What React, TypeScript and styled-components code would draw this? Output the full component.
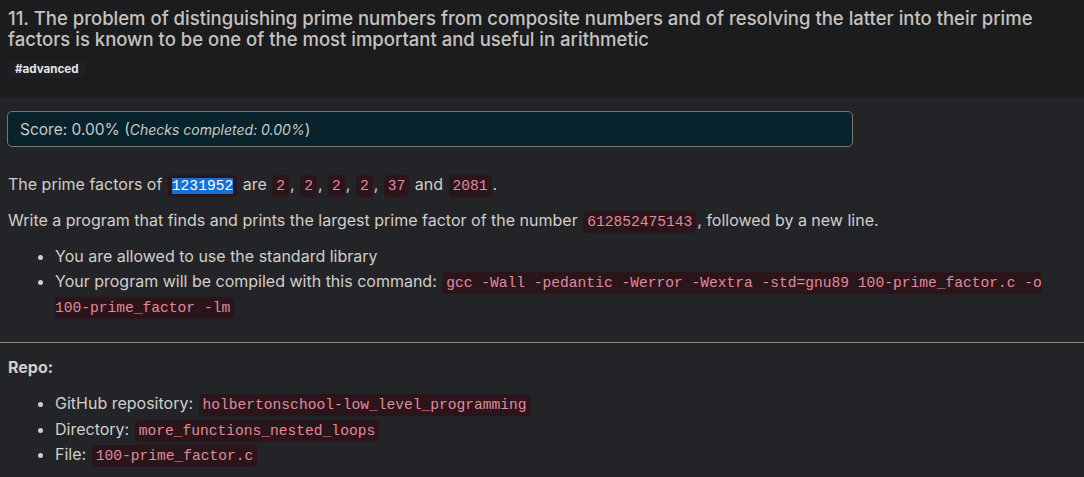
import React from "react";
import styled, { createGlobalStyle } from "styled-components";

const Global = createGlobalStyle`
  html, body { margin: 0; padding: 0; background: #232427; }
  body { font-family: Inter, "Noto Sans", sans-serif; }
`;

const Page = styled.div`
  width: 1084px;
  min-height: 477px;
  background: #232427;
  color: #d2cec9;
  overflow: hidden;
`;

const Header = styled.header`
  background: #1b1c1e;
  padding: 8px 8px 0 8px;
  height: 97px;
  box-sizing: border-box;
`;

const Title = styled.h1`
  margin: 0;
  font-size: 18.5px;
  line-height: 21px;
  font-weight: 500;
  color: #c6c2be;
`;

const Tag = styled.span`
  display: inline-block;
  margin-top: 10px;
  padding: 2px 7px;
  font-size: 11.6px;
  font-weight: 700;
  color: #e6e6e6;
  background: #1d1f22;
  border-radius: 3px;
`;

const Body = styled.main`
  padding: 14px 8px 0 8px;
`;

const ScoreBox = styled.div`
  width: 846px;
  box-sizing: border-box;
  margin-left: -1px;
  height: 36px;
  display: flex;
  align-items: center;
  padding: 0 12px;
  background: #08232b;
  border: 1px solid #7f746c;
  border-radius: 5px;
  font-size: 15.5px;
  color: #c9c9c9;
  em { font-size: 14px; }
`;

const P = styled.p<{ $mt: number }>`
  margin: 0;
  font-size: 16px;
  line-height: 26px;
  margin-top: ${(p) => p.$mt}px;
`;

const Code = styled.code`
  font-family: "Liberation Mono", monospace;
  font-size: 14.6px;
  line-height: 1;
  color: #e08a9d;
  background: #2a151b;
  padding: 3px 4px;
  border-radius: 4px;
  margin: 0 1px;
`;

const Selected = styled.span`
  background: #1a6fd4;
  color: #ffffff;
`;

const List = styled.ul<{ $mt: number }>`
  margin: ${(p) => p.$mt}px 0 0 0;
  padding-left: 47px;
  font-size: 16px;
  line-height: 25px;
`;

const Item = styled.li<{ $lh?: number }>`
  margin: 0;
  line-height: ${(p) => p.$lh ?? 25}px;
`;

const Rule = styled.hr`
  border: 0;
  border-top: 1px solid #8e8676;
  margin: 23px -8px 0 -8px;
`;

const Label = styled.p`
  margin: 13px 0 0 0;
  font-size: 16px;
  font-weight: 700;
  line-height: 22px;
  color: #d2cec9;
`;

export default function App() {
  return (
    <Page>
      <Global />
      <Header>
        <Title>
          11. The problem of distinguishing prime numbers from composite numbers and of resolving the latter into their prime factors is known to be one of the most important and useful in arithmetic
        </Title>
        <Tag>#advanced</Tag>
      </Header>
      <Body>
        <ScoreBox>
          <span>
            Score: 0.00% (<em>Checks completed: 0.00%</em>)
          </span>
        </ScoreBox>
        <P $mt={24}>
          The prime factors of <Code><Selected>1231952</Selected></Code> are <Code>2</Code>, <Code>2</Code>, <Code>2</Code>, <Code>2</Code>, <Code>37</Code> and <Code>2081</Code>.
        </P>
        <P $mt={10}>
          Write a program that finds and prints the largest prime factor of the number <Code>612852475143</Code>, followed by a new line.
        </P>
        <List $mt={11}>
          <Item>You are allowed to use the standard library</Item>
          <Item>
            Your program will be compiled with this command: <Code>gcc -Wall -pedantic -Werror -Wextra -std=gnu89 100-prime_factor.c -o 100-prime_factor -lm</Code>
          </Item>
        </List>
        <Rule />
        <Label>Repo:</Label>
        <List $mt={13}>
          <Item $lh={25.5}>GitHub repository: <Code>holbertonschool-low_level_programming</Code></Item>
          <Item $lh={25.5}>Directory: <Code>more_functions_nested_loops</Code></Item>
          <Item $lh={25.5}>File: <Code>100-prime_factor.c</Code></Item>
        </List>
      </Body>
    </Page>
  );
}
